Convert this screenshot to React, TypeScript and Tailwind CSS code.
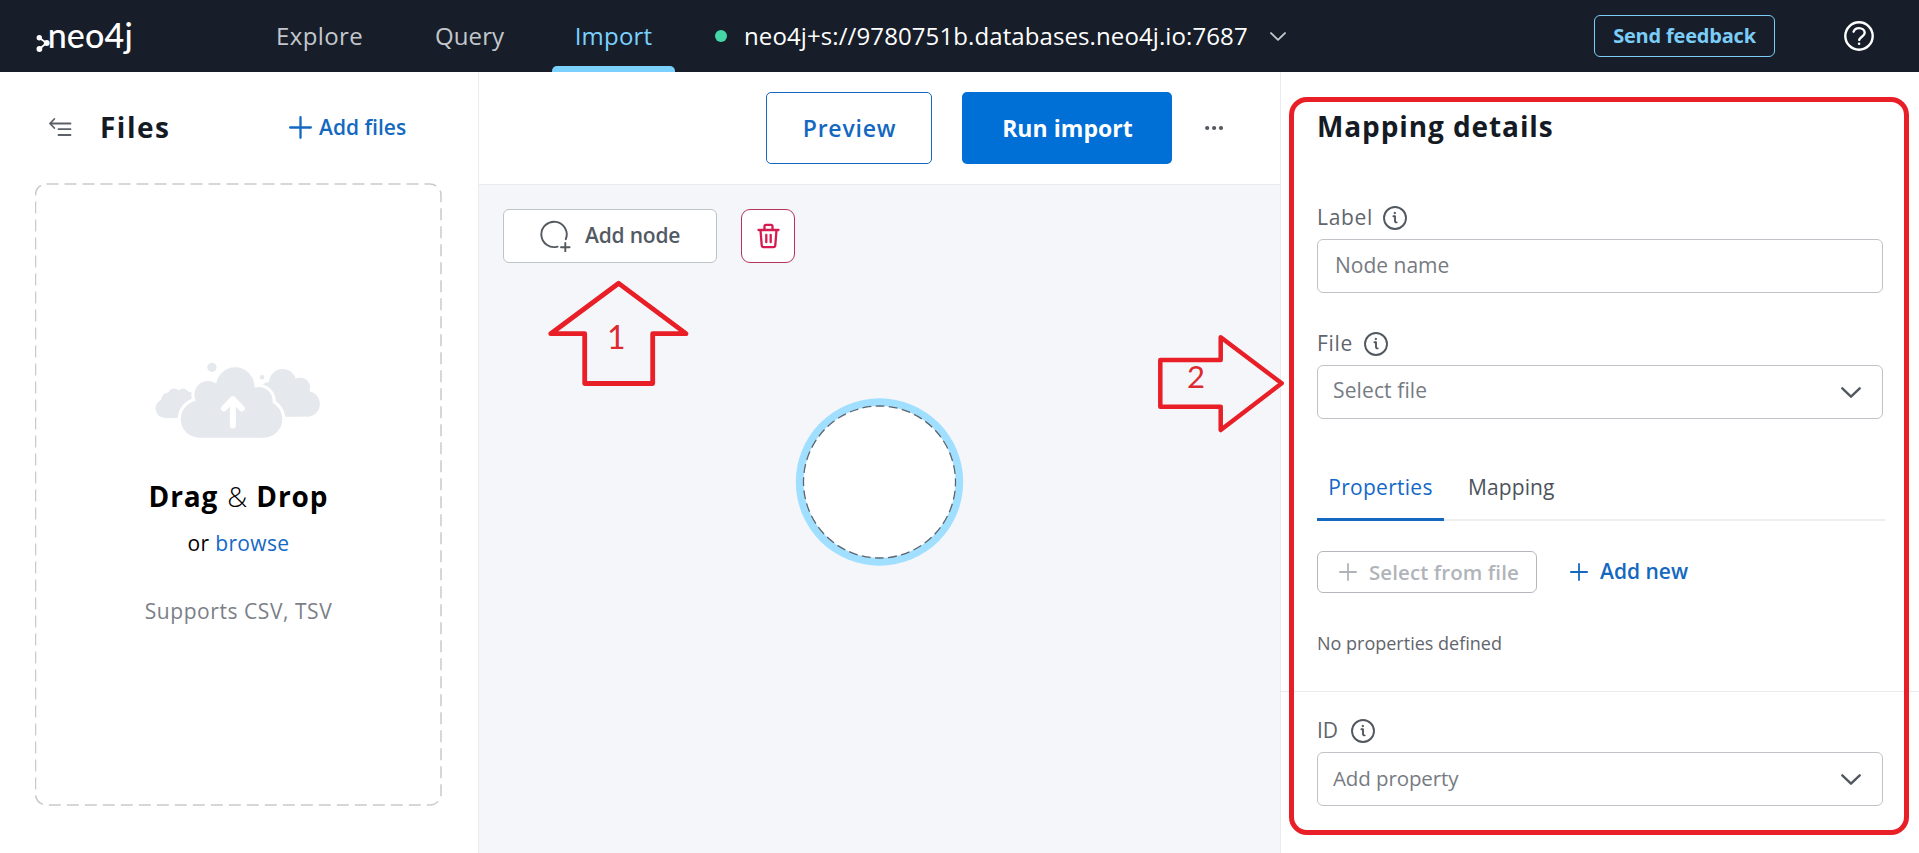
import React from 'react';

function Logo() {
  return (
    <div className="relative flex h-[40px] w-[97px] items-center justify-end" aria-label="neo4j">
      <svg className="absolute top-[14px] left-0" width="16" height="24" viewBox="0 0 16 24">
        <path d="M3.3 7.700 10.500 13 3.400 19" fill="none" stroke="#fff" strokeWidth="1.700" />
        <circle cx="3.300" cy="7.700" r="2.700" fill="#fff" />
        <circle cx="10.700" cy="13" r="2.900" fill="#fff" />
        <circle cx="3.400" cy="19" r="2.900" fill="#fff" />
      </svg>
      <span className="-translate-y-[1.5px] font-['Lato',sans-serif] text-[34px] leading-[40px] font-medium tracking-[0.2px] text-white">neo4j</span>
    </div>
  );
}

function InfoIcon() {
  return (
    <svg className="size-6 shrink-0" viewBox="0 0 24 24" fill="none" stroke="#525860" strokeWidth="1.9" strokeLinecap="round" strokeLinejoin="round">
      <circle cx="12" cy="12" r="11" />
      <path d="M10.400 10.300h1.600v4.700c0 1 .5 1.500 1.700 1.400" />
      <circle cx="11.700" cy="7" r="0.700" fill="#525860" strokeWidth="1" />
    </svg>
  );
}

function ChevronDown({ className }: { className: string }) {
  return (
    <svg className={className} viewBox="0 0 20 11" fill="none" stroke="currentColor" strokeWidth="2.4" strokeLinecap="round" strokeLinejoin="round">
      <path d="m1.300 1.300 8.700 8.400 8.700-8.400" />
    </svg>
  );
}

function Plus({ className }: { className: string }) {
  return (
    <svg className={className} viewBox="0 0 18 18" fill="none" stroke="currentColor" strokeWidth="1.8" strokeLinecap="round">
      <path d="M9 .9v16.2M.9 9h16.2" />
    </svg>
  );
}

function Clouds() {
  return (
    <svg width="177" height="83" viewBox="90 60 530 250" fill="#e5e8ed">
      <circle cx="275" cy="82" r="14" />
      <circle cx="426" cy="112" r="7" />
      <circle cx="134" cy="206" r="29" />
      <circle cx="144" cy="180" r="22" />
      <circle cx="161" cy="164" r="18" />
      <circle cx="188" cy="163" r="17" />
      <circle cx="206" cy="170" r="14" />
      <path d="M134 165h96v70h-96z" />
      <circle cx="488" cy="128" r="41" />
      <circle cx="541" cy="143" r="30" />
      <circle cx="561" cy="192" r="39" />
      <circle cx="446" cy="152" r="26" />
      <path d="M440 140h110v91h-110z" />
      <g stroke="#fff" strokeWidth="18">
        <circle cx="237" cy="238" r="56" />
        <circle cx="431" cy="238" r="56" />
        <circle cx="263" cy="164" r="41" />
        <circle cx="345" cy="140" r="58" />
        <circle cx="415" cy="184" r="43" />
      </g>
      <path d="M237 190h194v104H237zM270 150h130v60H270z" />
      <circle cx="237" cy="238" r="56" />
      <circle cx="431" cy="238" r="56" />
      <circle cx="263" cy="164" r="41" />
      <circle cx="345" cy="140" r="58" />
      <circle cx="415" cy="184" r="43" />
      <path d="M338 180v77M311 206l27-28 27 28" fill="none" stroke="#fff" strokeWidth="18" strokeLinecap="round" strokeLinejoin="round" />
    </svg>
  );
}

function Header() {
  return (
    <header className="flex h-[72px] shrink-0 items-center bg-[#171e29] pr-[45px] pl-[36px]">
      <Logo />
      <nav className="ml-[143px] flex h-full items-center text-[24px] leading-[32px] text-[#c3c7cc]">
        <a className="w-[89px] tracking-[0.4px] whitespace-nowrap">Explore</a>
        <a className="ml-[70px] w-[72px] tracking-[0.1px] whitespace-nowrap">Query</a>
        <a className="ml-[45px] flex h-full w-[123px] flex-col text-[#7ad1ff]">
          <span className="flex flex-1 items-center justify-center pt-[6px] tracking-[0.200px]">Import</span>
          <span className="h-[6px] rounded-t-[5px] bg-[#7ad1ff]" />
        </a>
      </nav>
      <button className="ml-[40px] flex items-center text-white">
        <span className="size-3 rounded-full bg-[#45d6a5]" />
        <span className="ml-[17px] w-[507px] text-left text-[24px] leading-[32px] tracking-[0.100px] whitespace-nowrap">neo4j+s://9780751b.databases.neo4j.io:7687</span>
        <ChevronDown className="ml-[19px] h-[9px] w-[16px] text-[#c3c7cc]" />
      </button>
      <button className="ml-auto flex h-[42px] w-[181px] items-center justify-center rounded-[6px] border border-[#7bcdf8] text-[20px] font-bold tracking-[-0.200px] text-[#7bcdf8]">Send feedback</button>
      <svg className="ml-[69px] size-[30px]" viewBox="0 0 30 30" fill="none" stroke="#fff" strokeWidth="2.4" strokeLinecap="round" strokeLinejoin="round">
        <circle cx="15" cy="15" r="13.700" />
        <path d="M9.600 10.700c.8-2.200 3-3.600 5.400-3.600 3.200 0 5.700 2 5.700 4.700 0 3.600-4.700 4-5.500 7.100" />
        <circle cx="15.100" cy="22.700" r="1.300" fill="#fff" stroke="none" />
      </svg>
    </header>
  );
}

function FilesPanel() {
  return (
    <aside className="flex w-[479px] shrink-0 flex-col border-r border-[#e9ebef] bg-white">
      <div className="flex h-[111px] items-center pl-[48px]">
        <svg className="h-[20px] w-[24px]" viewBox="0 0 24 20" fill="none" stroke="#5c6168" strokeWidth="1.800" strokeLinecap="round" strokeLinejoin="round">
          <path d="M2 5.500h20.500M6.300 1 2 5.500 6.300 10M10.500 11.200h12M10.500 17h12" />
        </svg>
        <h2 className="ml-[28px] w-[189px] -translate-y-[1.500px] text-[28px] leading-[36px] font-bold tracking-[1.500px] text-[#151b25]">Files</h2>
        <button className="flex items-center text-[#1468c0]">
          <Plus className="size-[23px]" />
          <span className="ml-[7px] text-[21px] font-semibold whitespace-nowrap">Add files</span>
        </button>
      </div>
      <div className="relative ml-[35px] flex h-[622px] w-[407px] flex-col items-center pt-[177px]">
        <svg className="absolute inset-0" width="407" height="623" fill="none">
          <rect x="0.500" y="1" width="405.500" height="621" rx="11" stroke="#c9cacc" strokeWidth="1.500" strokeDasharray="12 6" />
        </svg>
        <Clouds />
        <div className="mt-[33px] flex gap-[9px] text-[28px] leading-[40px] text-black">
          <span className="font-bold tracking-[0.900px]">Drag</span>
          <span className="font-light">&amp;</span>
          <span className="font-bold tracking-[0.900px]">Drop</span>
        </div>
        <p className="mt-[11px] text-[21px] leading-[32px] tracking-[0.340px] text-black">
          or <a className="text-[#1468c8]">browse</a>
        </p>
        <p className="mt-[36px] text-[21px] leading-[32px] tracking-[0.560px] text-[#7b8087]">Supports CSV, TSV</p>
      </div>
    </aside>
  );
}

function Workspace() {
  return (
    <main className="flex flex-1 flex-col">
      <div className="flex h-[113px] items-center border-b border-[#e9ebef] bg-white pl-[287px]">
        <button className="h-[72px] w-[166px] rounded-[5px] border border-[#1468c0] pl-px text-[23px] font-semibold tracking-[0.800px] text-[#1468c0]">Preview</button>
        <button className="ml-[30px] h-[72px] w-[210px] rounded-[5px] bg-[#006fd6] pl-px text-[23px] font-bold tracking-[0.050px] text-white">Run import</button>
        <svg className="ml-[33px]" width="19" height="6" viewBox="0 0 19 6" fill="#54595f">
          <circle cx="2.200" cy="3" r="2.100" />
          <circle cx="9.100" cy="3" r="2.100" />
          <circle cx="16" cy="3" r="2.100" />
        </svg>
      </div>
      <div className="relative flex-1 bg-[#f5f6fa]">
        <div className="flex pt-[24px] pl-[24px]">
          <button className="flex h-[54px] w-[214px] items-center rounded-[6px] border border-[#c0c3c7] bg-white pl-[35px] text-[21px] font-semibold tracking-[-0.200px] text-[#525a63]">
            <svg className="size-[32px]" viewBox="0 0 32 32" fill="none" stroke="#54595f" strokeWidth="1.900" strokeLinecap="round">
              <path d="M26.800 19.200A12.700 12.700 0 1 0 18.600 26.600M26.300 23v8.500M22 27.300h8.600" />
            </svg>
            <span className="ml-[14px]">Add node</span>
          </button>
          <button className="ml-[24px] flex h-[54px] w-[54px] items-center justify-center rounded-[9px] border border-[#b5325c] bg-white">
            <svg className="h-[26px] w-[23px]" viewBox="0 0 23 26" fill="none" stroke="#d61b51" strokeWidth="2.300" strokeLinecap="round" strokeLinejoin="round">
              <path d="M1.500 7h20M3.500 7l1.200 15.200a2 2 0 0 0 2 1.900h9.600a2 2 0 0 0 2-1.900L19.500 7M7.500 7V3.300a1.500 1.500 0 0 1 1.500-1.500h5a1.500 1.500 0 0 1 1.500 1.500V7M9.300 11.800v7.400M13.700 11.800v7.400" />
            </svg>
          </button>
        </div>
        <svg className="absolute top-[213px] left-[316px]" width="169" height="169" viewBox="0 0 169 169">
          <circle cx="84.500" cy="84" r="83.700" fill="#a0dfff" />
          <circle cx="84.500" cy="84" r="76" fill="#fff" stroke="#5c646d" strokeWidth="1.300" strokeDasharray="8.900 4.363" strokeDashoffset="4.450" />
        </svg>
        <div className="absolute top-[94px] left-[68px] flex h-[110px] w-[143px]">
          <svg className="absolute inset-0" width="143" height="110" fill="none" stroke="#e81f26" strokeWidth="4.800" strokeLinejoin="round">
            <path d="M71.700 4.300 139 54.700H105.700V104.500H37.700V54.700H3.700z" />
          </svg>
          <span className="relative mt-[39px] ml-[60px] font-['Lato',sans-serif] text-[32px] leading-[38px] text-[#dc2a30]">1</span>
        </div>
      </div>
    </main>
  );
}

function Select({ text, className }: { text: string; className: string }) {
  return (
    <button className="flex h-[54px] w-[566px] items-center justify-between rounded-[6px] border border-[#c0c3c7] bg-white pr-[21px] pl-[15px] text-[#767b82]">
      <span className={className}>{text}</span>
      <ChevronDown className="h-[11px] w-[20px] text-[#525860]" />
    </button>
  );
}

function FieldLabel({ text, className }: { text: string; className: string }) {
  return (
    <div className="flex h-[42px] items-center text-[21px] text-[#5f656d]">
      <span className={className}>{text}</span>
      <InfoIcon />
    </div>
  );
}

function MappingPanel() {
  return (
    <aside className="relative flex w-[639px] shrink-0 flex-col border-l border-[#e9ebef] bg-white">
      <div className="flex h-[620px] shrink-0 flex-col border-b border-[#e9ebee] pl-[36px]">
        <h2 className="mt-[36px] text-[28px] leading-[36px] font-bold tracking-[0.900px] text-[#151b25]">Mapping details</h2>
        <div className="mt-[53px]">
          <FieldLabel text="Label" className="w-[66px] tracking-[0.700px]" />
          <div className="flex h-[54px] w-[566px] items-center rounded-[6px] border border-[#c0c3c7] pl-[17px] text-[21px] text-[#767b82]">
            <span>Node name</span>
          </div>
        </div>
        <div className="mt-[30px]">
          <FieldLabel text="File" className="w-[47px] tracking-[0.700px]" />
          <Select text="Select file" className="-translate-y-px text-[21px] tracking-[0.120px]" />
        </div>
        <div className="mt-[36px] flex h-[66px] w-[568px] border-b-2 border-[#eceef0] text-[21px]">
          <button className="h-[66px] w-[127px] border-b-[3px] border-[#1468c0] pt-[3px] tracking-[0.280px] text-[#1468c8]">Properties</button>
          <button className="h-[63px] pt-[3px] pl-[24px] tracking-[0.100px] text-[#4d535b]">Mapping</button>
        </div>
        <div className="mt-[30px] flex h-[42px] items-center">
          <button className="flex h-[42px] w-[220px] items-center rounded-[6px] border border-[#b4b8be] pl-[21px] text-[20.5px] font-semibold tracking-[0.080px] whitespace-nowrap text-[#b0b4ba]">
            <Plus className="size-[18px] shrink-0" />
            <span className="ml-[12px]">Select from file</span>
          </button>
          <button className="ml-[33px] flex items-center text-[21px] font-semibold text-[#1468c0]">
            <Plus className="size-[18px]" />
            <span className="ml-[12px]">Add new</span>
          </button>
        </div>
        <p className="mt-[38px] text-[18px] leading-[24px] text-[#5f656d]">No properties defined</p>
      </div>
      <div className="pt-[18px] pl-[36px]">
        <FieldLabel text="ID" className="w-[34px]" />
        <Select text="Add property" className="-translate-y-px text-[20.5px] tracking-[-0.100px]" />
      </div>
      <div className="pointer-events-none absolute top-[25px] left-[8px] h-[738px] w-[620px] rounded-[18px] border-[5px] border-[#e81f26]" />
      <div className="absolute top-[262px] -left-[124px] flex h-[100px] w-[128px]">
        <svg className="absolute inset-0" width="128" height="100" fill="none" stroke="#e81f26" strokeWidth="4.500" strokeLinejoin="round">
          <path d="M3.300 26H63.700V3.300L124.700 49.300 63.700 96V72.700H3.300z" />
        </svg>
        <span className="relative mt-[23px] ml-[30px] font-['Lato',sans-serif] text-[31px] leading-[38px] text-[#dc2a30]">2</span>
      </div>
    </aside>
  );
}

export default function App() {
  return (
    <div className="flex h-[853px] w-full flex-col overflow-hidden bg-white font-['Open_Sans',sans-serif]">
      <Header />
      <div className="flex flex-1">
        <FilesPanel />
        <Workspace />
        <MappingPanel />
      </div>
    </div>
  );
}
